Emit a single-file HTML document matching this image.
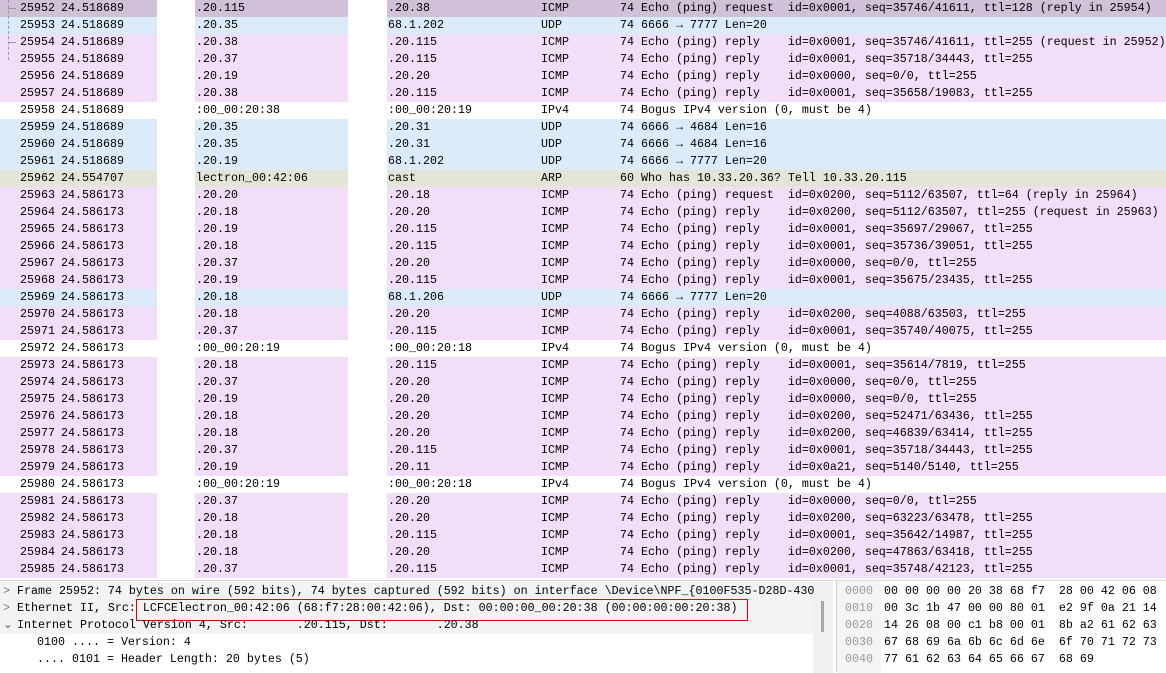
<!DOCTYPE html>
<html><head><meta charset="utf-8"><style>
*{margin:0;padding:0;box-sizing:border-box}
body{width:1166px;height:672px;overflow:hidden;background:#fff;font-family:"Liberation Mono",monospace;font-size:11.67px;color:#000;position:relative}
.r{position:absolute;left:0;width:1166px;height:17px;line-height:17px;white-space:pre}
.r span{position:absolute;top:0}
.i{background:#f2def8}.u{background:#dcebfa}.a{background:#e3e5d9}.s{background:#d0c1d8}.w{background:#fff}
.m1{position:absolute;left:157px;top:0;width:38px;height:578px;background:#fff}
.m2{position:absolute;left:348px;top:0;width:39px;height:578px;background:#fff}
.d{position:absolute;left:0;top:580px;width:836px;height:92px;border-top:1px solid #d8d8d8}
.dl{position:absolute;white-space:pre;height:17px;line-height:17px}
.h{position:absolute;left:836px;top:580px;width:330px;height:92px;border-left:1px solid #d0d0d0;border-top:1px solid #d8d8d8}
</style></head><body>
<div id="list"></div>
<div class="m1"></div><div class="m2"></div>
<div style="position:absolute;left:8px;top:0;height:60px;border-left:1px dashed #999"></div>
<div style="position:absolute;left:8px;top:8px;width:8px;border-top:1px solid #999"></div>
<div style="position:absolute;left:8px;top:42px;width:8px;border-top:1px solid #999"></div>
<div class="d">
<div style="position:absolute;left:0;top:1px;width:813px;height:52px;background:#f3f3f3"></div>
<div style="position:absolute;left:813px;top:1px;width:20px;height:91px;background:#f0f0f0"></div>
<div style="position:absolute;left:821px;top:20px;width:3px;height:31px;background:#a8a8a8"></div>
<div class="dl" style="left:3px;top:2px;color:#777">&gt;</div><div class="dl" style="left:17px;top:2px">Frame 25952: 74 bytes on wire (592 bits), 74 bytes captured (592 bits) on interface \Device\NPF_{0100F535-D28D-430</div>
<div class="dl" style="left:3px;top:19px;color:#777">&gt;</div><div class="dl" style="left:17px;top:19px">Ethernet II, Src: LCFCElectron_00:42:06 (68:f7:28:00:42:06), Dst: 00:00:00_00:20:38 (00:00:00:00:20:38)</div>
<div style="position:absolute;left:136px;top:18px;width:612px;height:22px;border:1.5px solid #e00000"></div>
<div class="dl" style="left:3px;top:36px;color:#555">&#8964;</div><div class="dl" style="left:17px;top:36px">Internet Protocol Version 4, Src:       .20.115, Dst:       .20.38</div>
<div class="dl" style="left:37px;top:53px">0100 .... = Version: 4</div>
<div class="dl" style="left:37px;top:70px">.... 0101 = Header Length: 20 bytes (5)</div>
</div>
<div class="h">
<div style="position:absolute;left:0;top:0;width:44px;height:92px;background:#f4f4f4"></div>
<div class="dl" style="left:8px;top:2px;color:#999;line-height:17px">0000
0010
0020
0030
0040</div>
<div class="dl" style="left:47px;top:2px;line-height:17px">00 00 00 00 20 38 68 f7  28 00 42 06 08
00 3c 1b 47 00 00 80 01  e2 9f 0a 21 14
14 26 08 00 c1 b8 00 01  8b a2 61 62 63
67 68 69 6a 6b 6c 6d 6e  6f 70 71 72 73
77 61 62 63 64 65 66 67  68 69</div>
</div>
<script>
var R=[
["s","25952","24.518689",".20.115",".20.38","ICMP","74 Echo (ping) request  id=0x0001, seq=35746/41611, ttl=128 (reply in 25954)"],
["u","25953","24.518689",".20.35","68.1.202","UDP","74 6666 \u2192 7777 Len=20"],
["i","25954","24.518689",".20.38",".20.115","ICMP","74 Echo (ping) reply    id=0x0001, seq=35746/41611, ttl=255 (request in 25952)"],
["i","25955","24.518689",".20.37",".20.115","ICMP","R0x0001, seq=35718/34443, ttl=255"],
["i","25956","24.518689",".20.19",".20.20","ICMP","R0x0000, seq=0/0, ttl=255"],
["i","25957","24.518689",".20.38",".20.115","ICMP","R0x0001, seq=35658/19083, ttl=255"],
["w","25958","24.518689",":00_00:20:38",":00_00:20:19","IPv4","B"],
["u","25959","24.518689",".20.35",".20.31","UDP","74 6666 \u2192 4684 Len=16"],
["u","25960","24.518689",".20.35",".20.31","UDP","74 6666 \u2192 4684 Len=16"],
["u","25961","24.518689",".20.19","68.1.202","UDP","74 6666 \u2192 7777 Len=20"],
["a","25962","24.554707","lectron_00:42:06","cast","ARP","60 Who has 10.33.20.36? Tell 10.33.20.115"],
["i","25963","24.586173",".20.20",".20.18","ICMP","74 Echo (ping) request  id=0x0200, seq=5112/63507, ttl=64 (reply in 25964)"],
["i","25964","24.586173",".20.18",".20.20","ICMP","74 Echo (ping) reply    id=0x0200, seq=5112/63507, ttl=255 (request in 25963)"],
["i","25965","24.586173",".20.19",".20.115","ICMP","R0x0001, seq=35697/29067, ttl=255"],
["i","25966","24.586173",".20.18",".20.115","ICMP","R0x0001, seq=35736/39051, ttl=255"],
["i","25967","24.586173",".20.37",".20.20","ICMP","R0x0000, seq=0/0, ttl=255"],
["i","25968","24.586173",".20.19",".20.115","ICMP","R0x0001, seq=35675/23435, ttl=255"],
["u","25969","24.586173",".20.18","68.1.206","UDP","74 6666 \u2192 7777 Len=20"],
["i","25970","24.586173",".20.18",".20.20","ICMP","R0x0200, seq=4088/63503, ttl=255"],
["i","25971","24.586173",".20.37",".20.115","ICMP","R0x0001, seq=35740/40075, ttl=255"],
["w","25972","24.586173",":00_00:20:19",":00_00:20:18","IPv4","B"],
["i","25973","24.586173",".20.18",".20.115","ICMP","R0x0001, seq=35614/7819, ttl=255"],
["i","25974","24.586173",".20.37",".20.20","ICMP","R0x0000, seq=0/0, ttl=255"],
["i","25975","24.586173",".20.19",".20.20","ICMP","R0x0000, seq=0/0, ttl=255"],
["i","25976","24.586173",".20.18",".20.20","ICMP","R0x0200, seq=52471/63436, ttl=255"],
["i","25977","24.586173",".20.18",".20.20","ICMP","R0x0200, seq=46839/63414, ttl=255"],
["i","25978","24.586173",".20.37",".20.115","ICMP","R0x0001, seq=35718/34443, ttl=255"],
["i","25979","24.586173",".20.19",".20.11","ICMP","R0x0a21, seq=5140/5140, ttl=255"],
["w","25980","24.586173",":00_00:20:19",":00_00:20:18","IPv4","B"],
["i","25981","24.586173",".20.37",".20.20","ICMP","R0x0000, seq=0/0, ttl=255"],
["i","25982","24.586173",".20.18",".20.20","ICMP","R0x0200, seq=63223/63478, ttl=255"],
["i","25983","24.586173",".20.18",".20.115","ICMP","R0x0001, seq=35642/14987, ttl=255"],
["i","25984","24.586173",".20.18",".20.20","ICMP","R0x0200, seq=47863/63418, ttl=255"],
["i","25985","24.586173",".20.37",".20.115","ICMP","R0x0001, seq=35748/42123, ttl=255"]];
var h="";
R.forEach(function(r,k){var t=r[6];
if(t[0]=="R")t="74 Echo (ping) reply    id="+t.slice(1);
if(t=="B")t="74 Bogus IPv4 version (0, must be 4)";
h+='<div class="r '+r[0]+'" style="top:'+(k*17)+'px"><span style="left:20px">'+r[1]+'</span><span style="left:61px">'+r[2]+'</span><span style="left:196px">'+r[3]+'</span><span style="left:388px">'+r[4]+'</span><span style="left:541px">'+r[5]+'</span><span style="left:620px">'+t+'</span></div>';});
document.getElementById("list").innerHTML=h;
</script>
</body></html>
